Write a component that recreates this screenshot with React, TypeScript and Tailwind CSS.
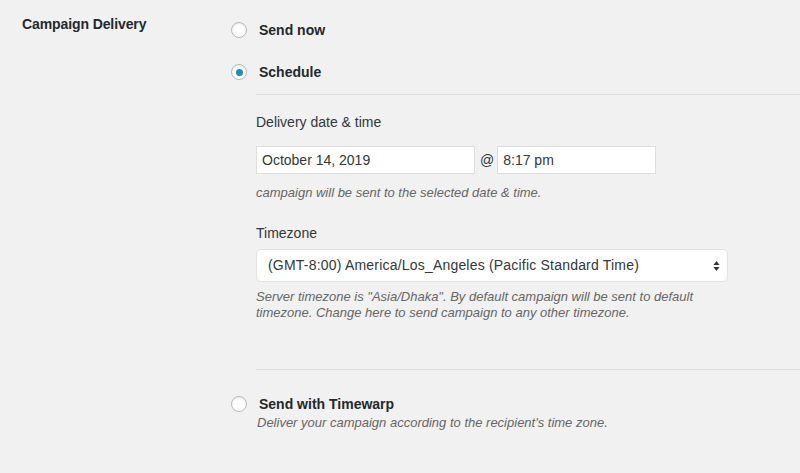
import React from "react";

function Radio({ checked }: { checked?: boolean }) {
  return (
    <span className="w-4 h-4 rounded-full border border-[#b4b9be] bg-white shadow-[inset_0_1px_2px_rgba(0,0,0,0.1)] flex items-center justify-center shrink-0">
      {checked && <span className="w-[7px] h-[7px] rounded-full bg-[#1e8cbe]" />}
    </span>
  );
}

export default function App() {
  return (
    <div
      className="w-[800px] h-[473px] bg-[#f1f1f1] flex text-[#32373c] overflow-hidden"
      style={{ fontFamily: '"Liberation Sans", Arial, sans-serif' }}
    >
      <div className="w-[231px] shrink-0 pl-[22px] pt-[14px]">
        <div className="text-[14px] leading-5 font-bold text-[#23282d] tracking-[-0.1px]">Campaign Delivery</div>
      </div>
      <div className="flex-1 flex flex-col">
        <div className="mt-[22px] h-4 flex items-center">
          <Radio />
          <span className="ml-3 text-[14px] font-bold text-[#23282d]">Send now</span>
        </div>
        <div className="mt-[26px] h-4 flex items-center">
          <Radio checked />
          <span className="ml-3 text-[14px] font-bold text-[#23282d]">Schedule</span>
        </div>
        <div className="ml-[25px] mt-[14px] h-px bg-[#dcdcdc]" />
        <div className="ml-[25px] flex flex-col">
          <div className="mt-[17px] text-[14px] leading-5">Delivery date &amp; time</div>
          <div className="mt-[14px] flex items-center">
            <div className="w-[219px] h-[28px] bg-white border border-[#ddd] flex items-center pl-[5px] text-[14px] text-[#32373c]">
              October 14, 2019
            </div>
            <span className="ml-[5px] mr-[3px] text-[14px]">@</span>
            <div className="w-[159px] h-[28px] bg-white border border-[#ddd] flex items-center pl-[5px] text-[14px] text-[#32373c]">
              8:17 pm
            </div>
          </div>
          <div className="mt-[10px] text-[13px] leading-[18px] italic text-[#666]">
            campaign will be sent to the selected date &amp; time.
          </div>
          <div className="mt-[21px] text-[14px] leading-5">Timezone</div>
          <div className="mt-[6px] w-[472px] h-[33px] bg-white border border-[#e2e2e2] rounded-[5px] flex items-center justify-between pl-[11px] pr-[7px] text-[14px] text-[#32373c]">
            <span className="tracking-[0.2px]">(GMT-8:00) America/Los_Angeles (Pacific Standard Time)</span>
            <svg width="7" height="12" viewBox="0 0 7 12">
              <path d="M3.5 1 L6.5 5 L0.5 5 Z" fill="#333" />
              <path d="M3.5 11 L6.5 7 L0.5 7 Z" fill="#333" />
            </svg>
          </div>
          <div className="mt-[7px] text-[13px] leading-4 italic text-[#666] w-[450px]">
            Server timezone is "Asia/Dhaka". By default campaign will be sent to default timezone. Change here to send campaign to any other timezone.
          </div>
        </div>
        <div className="ml-[25px] mt-[48px] h-px bg-[#dcdcdc]" />
        <div className="mt-[26px] h-4 flex items-center">
          <Radio />
          <span className="ml-3 text-[14px] font-bold text-[#23282d]">Send with Timewarp</span>
        </div>
        <div className="ml-[26px] mt-[3px] text-[13px] leading-4 italic text-[#666]">
          Deliver your campaign according to the recipient's time zone.
        </div>
      </div>
    </div>
  );
}
